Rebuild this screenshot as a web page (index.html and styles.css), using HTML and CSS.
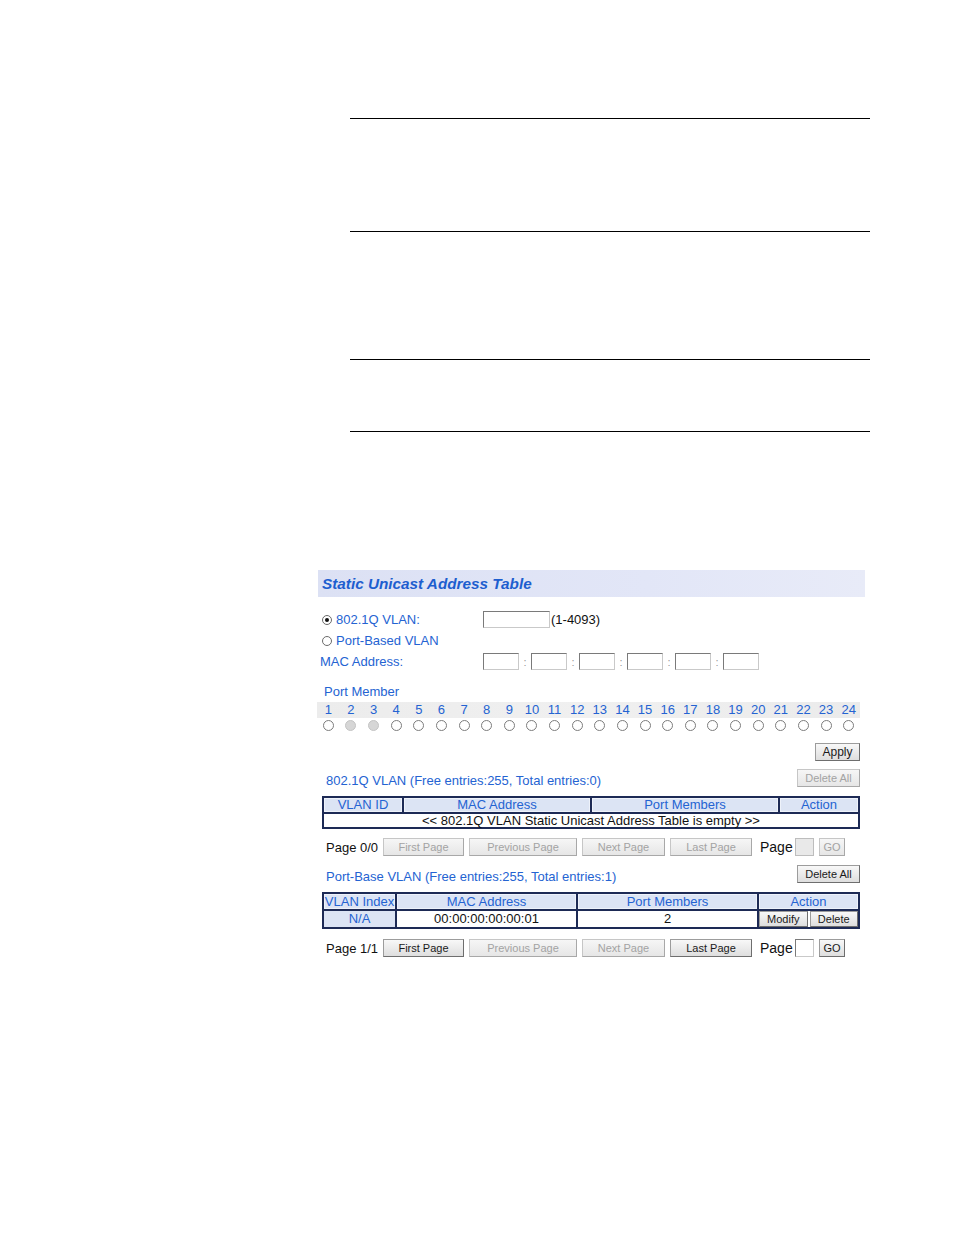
FILE: index.html
```html
<!DOCTYPE html>
<html>
<head>
<meta charset="utf-8">
<link rel="stylesheet" href="styles.css">
</head>
<body>
<div class="page">
  <div class="rules">
    <div class="rule"></div>
    <div class="gap g1"></div>
    <div class="rule"></div>
    <div class="gap g2"></div>
    <div class="rule"></div>
    <div class="gap g3"></div>
    <div class="rule"></div>
  </div>

  <div class="panel">
    <div class="title-bar"><span class="title">Static Unicast Address Table</span></div>

    <div class="form">
      <div class="frow">
        <div class="flabel"><span class="radio checked"></span>802.1Q VLAN:</div>
        <div class="fctrl"><span class="inp vid"></span><span class="range">(1-4093)</span></div>
      </div>
      <div class="frow">
        <div class="flabel"><span class="radio"></span>Port-Based VLAN</div>
      </div>
      <div class="frow">
        <div class="flabel mac">MAC Address:</div>
        <div class="fctrl">
          <span class="inp mac-inp"></span><span class="colon">:</span>
          <span class="inp mac-inp"></span><span class="colon">:</span>
          <span class="inp mac-inp"></span><span class="colon">:</span>
          <span class="inp mac-inp"></span><span class="colon">:</span>
          <span class="inp mac-inp"></span><span class="colon">:</span>
          <span class="inp mac-inp"></span>
        </div>
      </div>
    </div>

    <div class="port-title">Port Member</div>
    <div class="port-nums">
      <span>1</span><span>2</span><span>3</span><span>4</span><span>5</span><span>6</span><span>7</span><span>8</span><span>9</span><span>10</span><span>11</span><span>12</span><span>13</span><span>14</span><span>15</span><span>16</span><span>17</span><span>18</span><span>19</span><span>20</span><span>21</span><span>22</span><span>23</span><span>24</span>
    </div>
    <div class="port-radios">
      <span><i class="pr"></i></span><span><i class="pr dis"></i></span><span><i class="pr dis"></i></span><span><i class="pr"></i></span><span><i class="pr"></i></span><span><i class="pr"></i></span><span><i class="pr"></i></span><span><i class="pr"></i></span><span><i class="pr"></i></span><span><i class="pr"></i></span><span><i class="pr"></i></span><span><i class="pr"></i></span><span><i class="pr"></i></span><span><i class="pr"></i></span><span><i class="pr"></i></span><span><i class="pr"></i></span><span><i class="pr"></i></span><span><i class="pr"></i></span><span><i class="pr"></i></span><span><i class="pr"></i></span><span><i class="pr"></i></span><span><i class="pr"></i></span><span><i class="pr"></i></span><span><i class="pr"></i></span>
    </div>

    <div class="apply-row"><span class="btn apply">Apply</span></div>

    <div class="list-head">
      <span class="list-label">802.1Q VLAN (Free entries:255, Total entries:0)</span>
      <span class="btn off delall">Delete All</span>
    </div>

    <div class="tbl t1">
      <div class="th">VLAN ID</div>
      <div class="th">MAC Address</div>
      <div class="th">Port Members</div>
      <div class="th">Action</div>
      <div class="td span4">&lt;&lt; 802.1Q VLAN Static Unicast Address Table is empty &gt;&gt;</div>
    </div>

    <div class="pager">
      <span class="pg">Page 0/0</span>
      <span class="btn off first">First Page</span>
      <span class="btn off prev">Previous Page</span>
      <span class="btn off next">Next Page</span>
      <span class="btn off last">Last Page</span>
      <span class="pg pg2">Page</span>
      <span class="inp pinp dis"></span>
      <span class="btn off go">GO</span>
    </div>

    <div class="list-head lh2">
      <span class="list-label">Port-Base VLAN (Free entries:255, Total entries:1)</span>
      <span class="btn delall">Delete All</span>
    </div>

    <div class="tbl t2">
      <div class="th">VLAN Index</div>
      <div class="th">MAC Address</div>
      <div class="th">Port Members</div>
      <div class="th">Action</div>
      <div class="td blue">N/A</div>
      <div class="td">00:00:00:00:00:01</div>
      <div class="td">2</div>
      <div class="td act"><span class="btn sm">Modify</span><span class="btn sm">Delete</span></div>
    </div>

    <div class="pager pager2">
      <span class="pg">Page 1/1</span>
      <span class="btn first">First Page</span>
      <span class="btn off prev">Previous Page</span>
      <span class="btn off next">Next Page</span>
      <span class="btn last">Last Page</span>
      <span class="pg pg2">Page</span>
      <span class="inp pinp"></span>
      <span class="btn go">GO</span>
    </div>
  </div>
</div>
</body>
</html>
```

FILE: styles.css
```css
* { box-sizing: border-box; }
body {
  margin: 0;
  background: #fff;
  font-family: "Liberation Sans", Arial, sans-serif;
  font-size: 13px;
  color: #111;
}
.page { width: 954px; height: 1235px; overflow: hidden; padding-top: 118px; }

.rules { margin-left: 350px; width: 520px; }
.rule { height: 1px; background: #000; }
.g1 { height: 112px; }
.g2 { height: 127px; }
.g3 { height: 71px; }

.panel { margin-top: 138px; margin-left: 318px; width: 547px; }

.title-bar {
  height: 27px;
  background: linear-gradient(to right, #dce1f4, #e2e6f7 60%, #e8ebf8);
  padding-left: 4px;
  line-height: 27px;
}
.title {
  font-size: 15.3px;
  font-weight: bold;
  font-style: italic;
  color: #1d5ecf;
}

.form { margin-top: 12px; }
.frow { display: flex; height: 21px; align-items: center; }
.flabel {
  width: 165px;
  padding-left: 4px;
  color: #2463d2;
  display: flex;
  align-items: center;
}
.flabel.mac { padding-left: 2px; }
.fctrl { display: flex; align-items: center; }
.radio {
  width: 10px; height: 10px;
  border: 1px solid #6b6b6b;
  border-radius: 50%;
  margin-right: 4px;
  background: #fff;
  position: relative;
}
.radio.checked::after {
  content: "";
  position: absolute;
  left: 2px; top: 2px;
  width: 4px; height: 4px;
  border-radius: 50%;
  background: #111;
}
.inp {
  display: inline-block;
  height: 17px;
  border: 1px solid #7a7a7a;
  border-right-color: #c9c9c9;
  border-bottom-color: #c9c9c9;
  background: #fff;
}
.vid { width: 67px; }
.range { margin-left: 1px; color: #111; }
.mac-inp { width: 36px; }
.colon { width: 12px; text-align: center; color: #999; font-size: 11px; }

.port-title {
  margin-top: 10px;
  height: 20px;
  line-height: 20px;
  padding-left: 6px;
  color: #2463d2;
}
.port-nums, .port-radios {
  display: grid;
  grid-template-columns: repeat(24, 1fr);
  margin-left: -1px;
  width: 543px;
}
.port-nums {
  height: 16px;
  line-height: 16px;
  background: linear-gradient(to right, #ececec, #f0f0f0 50%, #ebebeb);
  color: #2463d2;
  text-align: center;
}
.port-radios { height: 14px; align-items: center; justify-items: center; }
.pr {
  display: block;
  width: 11px; height: 11px;
  border: 1px solid #7c7c7c;
  border-radius: 50%;
  background: #fff;
}
.pr.dis { background: #d6d6d6; border-color: #c4c4c4; }

.btn {
  display: inline-flex;
  align-items: center;
  justify-content: center;
  height: 18px;
  font-size: 11px;
  color: #1a1a1a;
  background: linear-gradient(#f8f8f8, #dedede);
  border: 1px solid #9c9c9c;
  border-right-color: #6e6e6e;
  border-bottom-color: #6e6e6e;
  white-space: nowrap;
}
.btn.off { color: #a3a3a3; border-color: #c6c6c6; border-right-color: #a8a8a8; border-bottom-color: #a8a8a8; background: linear-gradient(#f6f6f6, #e6e6e6); }

.apply-row { margin-top: 11px; display: flex; justify-content: flex-end; padding-right: 5px; }
.apply { width: 45px; font-size: 12px; }

.list-head {
  margin-top: 8px;
  height: 18px;
  display: flex;
  justify-content: space-between;
  align-items: center;
  padding-left: 8px;
  padding-right: 5px;
}
.lh2 { margin-top: 9px; }
.list-label { color: #2463d2; padding-top: 5px; }
.delall { width: 63px; }

.tbl {
  margin-top: 9px;
  margin-left: 4px;
  width: 538px;
  display: grid;
  gap: 2px;
  padding: 2px;
  background: #1d2a55;
}
.t1 { grid-template-columns: 78px 186px 186px 78px; grid-template-rows: 14px 13px; }
.t2 { margin-top: 9px; grid-template-columns: 71px 179px 179px 99px; grid-template-rows: 15px 16px; }
.th {
  background: #dce4f4;
  color: #2463d2;
  text-align: center;
  line-height: 14px;
  box-shadow: inset 0 0 0 1px #eef2fa;
}
.t2 .th { line-height: 15px; }
.td {
  background: #fff;
  text-align: center;
  line-height: 13px;
  color: #111;
}
.t2 .td { line-height: 16px; }
.td.blue { background: #dce4f4; color: #2463d2; }
.span4 { grid-column: 1 / 5; }
.td.act { display: flex; gap: 2px; background: #fff; }
.btn.sm { flex: 1; height: 16px; }

.pager {
  margin-top: 9px;
  display: flex;
  align-items: center;
  height: 18px;
  padding-left: 8px;
  gap: 5px;
}
.pager2 { margin-top: 10px; }
.pg { width: 52px; font-size: 13px; color: #111; white-space: nowrap; flex: none; }
.pg2 { width: 31px; margin-left: 3px; margin-right: -1px; font-size: 14px; }
.first { width: 81px; }
.prev { width: 108px; }
.next { width: 83px; }
.last { width: 82px; }
.pinp { width: 19px; height: 18px; }
.pinp.dis { background: #e9e9e9; border-color: #bdbdbd; }
.go { width: 26px; }
```
